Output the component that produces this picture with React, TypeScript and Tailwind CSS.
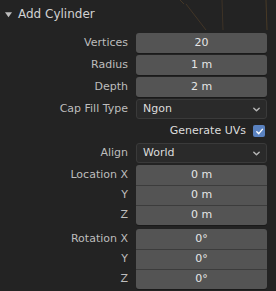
import { ReactNode } from "react";

const font = { fontFamily: '"DejaVu Sans", "Noto Sans", sans-serif' };

function Chevron() {
    return (
        <svg viewBox="0 0 10 10" className="h-[9px] w-[9px]" fill="none" stroke="#b5b5b5" strokeWidth="1.6" strokeLinecap="round" strokeLinejoin="round">
            <path d="M2 3.5 L5 6.5 L8 3.5" />
        </svg>
    );
}

function Row({ label, children }: { label: string; children: ReactNode }) {
    return (
        <div className="flex h-[20px] items-center">
            <div className="w-[136px] pr-[8px] text-right text-[11px] text-[#bdbdbd]">{label}</div>
            <div className="h-full w-[131px]">{children}</div>
        </div>
    );
}

function NumField({ value }: { value: string }) {
    return (
        <div className="flex h-full items-center justify-center rounded-[3px] bg-[#545454] text-[11px] text-[#e6e6e6] shadow-[0_1px_0_#1a1a1a]">
            {value}
        </div>
    );
}

function Select({ value }: { value: string }) {
    return (
        <div className="flex h-full items-center justify-between rounded-[3px] border border-[#3a3a3a] bg-[#2a2a2a] pl-[6px] pr-[5px] text-[11px] text-[#dcdcdc]">
            <span>{value}</span>
            <Chevron />
        </div>
    );
}

function Group({ labels, values }: { labels: string[]; values: string[] }) {
    return (
        <div className="flex">
            <div className="flex w-[136px] flex-col">
                {labels.map((l) => (
                    <div key={l} className="flex h-[20px] items-center justify-end pr-[8px] text-[11px] text-[#bdbdbd]">
                        {l}
                    </div>
                ))}
            </div>
            <div className="flex w-[131px] flex-col overflow-hidden rounded-[3px] bg-[#545454] shadow-[0_1px_0_#1a1a1a]">
                {values.map((v, i) => (
                    <div
                        key={i}
                        className={`flex h-[20px] items-center justify-center text-[11px] text-[#e6e6e6] ${i > 0 ? "border-t border-[#3c3c3c]" : ""}`}
                    >
                        {v}
                    </div>
                ))}
            </div>
        </div>
    );
}

export default function App() {
    return (
        <div className="relative h-[291px] w-[276px] overflow-hidden bg-[#232323]" style={font}>
            {/* faint viewport lines showing through at the top */}
            <svg className="absolute left-0 top-0" width="276" height="32" viewBox="0 0 276 32">
                <path d="M186 4 L206 30" stroke="#4a3a28" strokeWidth="1" opacity="0.8" />
                <path d="M222 0 L223 30" stroke="#4a3a28" strokeWidth="1" opacity="0.7" />
                <path d="M266 0 L267 30" stroke="#5a4528" strokeWidth="1" opacity="0.7" />
                <path d="M180 0 L184 4" stroke="#5a4528" strokeWidth="1" opacity="0.6" />
            </svg>

            <div className="relative flex h-[28px] items-center pl-[5px]">
                <svg viewBox="0 0 8 8" className="mr-[6px] h-[7px] w-[7px]" fill="#bdbdbd">
                    <path d="M0 1.5 L8 1.5 L4 7 Z" />
                </svg>
                <span className="text-[12px] text-[#d2d2d2]">Add Cylinder</span>
            </div>

            <div className="relative mt-[5px] flex flex-col gap-[2px]">
                <Row label="Vertices"><NumField value="20" /></Row>
                <Row label="Radius"><NumField value="1 m" /></Row>
                <Row label="Depth"><NumField value="2 m" /></Row>
                <Row label="Cap Fill Type"><Select value="Ngon" /></Row>
                <div className="flex h-[20px] items-center justify-end pr-[11px]">
                    <span className="mr-[7px] text-[11px] text-[#dcdcdc]">Generate UVs</span>
                    <div className="flex h-[12px] w-[12px] items-center justify-center rounded-[2px] bg-[#5a82c0]">
                        <svg viewBox="0 0 10 10" className="h-[9px] w-[9px]" fill="none" stroke="#ffffff" strokeWidth="1.6" strokeLinecap="round" strokeLinejoin="round">
                            <path d="M2 5.2 L4.2 7.4 L8.2 2.6" />
                        </svg>
                    </div>
                </div>
                <Row label="Align"><Select value="World" /></Row>
                <Group labels={["Location X", "Y", "Z"]} values={["0 m", "0 m", "0 m"]} />
                <div className="mt-[2px]">
                    <Group labels={["Rotation X", "Y", "Z"]} values={["0°", "0°", "0°"]} />
                </div>
            </div>
        </div>
    );
}
